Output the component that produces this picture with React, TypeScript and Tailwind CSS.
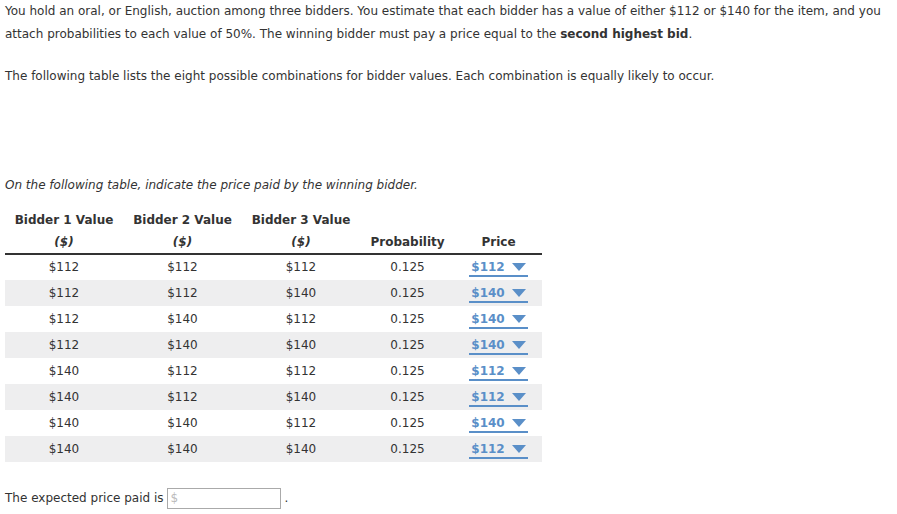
const ROWS = [
  ['$112', '$112', '$112', '0.125', '$112'],
  ['$112', '$112', '$140', '0.125', '$140'],
  ['$112', '$140', '$112', '0.125', '$140'],
  ['$112', '$140', '$140', '0.125', '$140'],
  ['$140', '$112', '$112', '0.125', '$112'],
  ['$140', '$112', '$140', '0.125', '$112'],
  ['$140', '$140', '$112', '0.125', '$140'],
  ['$140', '$140', '$140', '0.125', '$112'],
]

function PriceSelect({ value }: { value: string }) {
  return (
    <span className="inline-flex items-center gap-[7px] border-b-2 border-[#5a8fc8] px-[2px] leading-[16px] font-bold text-[#5a8fc8]">
      {value}
      <svg width="14" height="8" viewBox="0 0 14 8">
        <path d="M0 0 L14 0 L7 8 Z" fill="#5a8fc8" />
      </svg>
    </span>
  )
}

export default function App() {
  return (
    <div className="px-[5px] text-[12px] text-[#333] font-['Verdana','DejaVu_Sans',sans-serif] leading-[23px]">
      <p>
        You hold an oral, or English, auction among three bidders. You estimate that each bidder has a value of either
        $112 or $140 for the item, and you attach probabilities to each value of 50%. The winning bidder must pay a
        price equal to the <b>second highest bid</b>.
      </p>
      <p className="mt-[19px]">
        The following table lists the eight possible combinations for bidder values. Each combination is equally likely
        to occur.
      </p>

      <p className="mt-[86px] italic">On the following table, indicate the price paid by the winning bidder.</p>

      <table className="mt-[12px] border-collapse text-center">
        <thead>
          <tr className="border-b-[2px] border-[#333] font-bold">
            <th className="w-[118px] align-bottom pb-0 leading-[22px]">
              Bidder 1 Value
              <br />
              <i>($)</i>
            </th>
            <th className="w-[119px] align-bottom pb-0 leading-[22px]">
              Bidder 2 Value
              <br />
              <i>($)</i>
            </th>
            <th className="w-[118px] align-bottom pb-0 leading-[22px]">
              Bidder 3 Value
              <br />
              <i>($)</i>
            </th>
            <th className="w-[95px] align-bottom pb-0 leading-[22px]">Probability</th>
            <th className="w-[87px] align-bottom pb-0 leading-[22px]">Price</th>
          </tr>
        </thead>
        <tbody>
          {ROWS.map((r, i) => (
            <tr key={i} className={i % 2 === 1 ? 'bg-[#eeeeef]' : ''}>
              <td className="h-[26px] p-0">{r[0]}</td>
              <td className="p-0">{r[1]}</td>
              <td className="p-0">{r[2]}</td>
              <td className="p-0">{r[3]}</td>
              <td className="p-0">
                <PriceSelect value={r[4]} />
              </td>
            </tr>
          ))}
        </tbody>
      </table>

      <div className="mt-[25px] flex items-center">
        <span>The expected price paid is</span>
        <span className="ml-[3px] flex h-[21px] w-[114px] items-center border border-[#aaa] px-[3px] text-[#bbb]">$</span>
        <span className="ml-[4px]">.</span>
      </div>
    </div>
  )
}
